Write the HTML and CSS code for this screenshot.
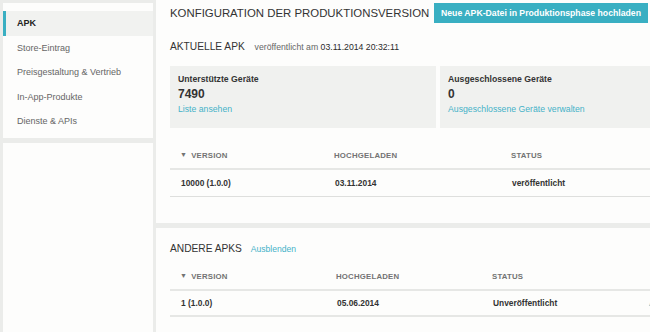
FILE: index.html
```html
<!DOCTYPE html>
<html lang="de">
<head>
    <meta charset="UTF-8">
    <title>APK | Produktionsversion</title>
    <link rel="stylesheet" href="styles.css">
</head>
<body>
    <div class="layout">
        <!-- Seitennavigation -->
        <aside class="sidebar">
            <nav class="card nav">
                <a class="nav-item active">APK</a>
                <a class="nav-item">Store-Eintrag</a>
                <a class="nav-item">Preisgestaltung &amp; Vertrieb</a>
                <a class="nav-item">In-App-Produkte</a>
                <a class="nav-item">Dienste &amp; APIs</a>
            </nav>
            <div class="card filler"></div>
        </aside>

        <main class="content">
            <section class="card panel current">
                <div class="panel-head">
                    <h1>Konfiguration der Produktionsversion</h1>
                    <button class="btn">Neue APK-Datei in Produktionsphase hochladen</button>
                </div>

                <h2 class="sub">Aktuelle APK <span class="meta">veröffentlicht am <b>03.11.2014 20:32:11</b></span></h2>

                <div class="stats">
                    <div class="stat">
                        <div class="stat-label">Unterstützte Geräte</div>
                        <div class="stat-value">7490</div>
                        <a class="link">Liste ansehen</a>
                    </div>
                    <div class="stat">
                        <div class="stat-label">Ausgeschlossene Geräte</div>
                        <div class="stat-value">0</div>
                        <a class="link">Ausgeschlossene Geräte verwalten</a>
                    </div>
                </div>

                <table class="apk-table first">
                    <thead>
                        <tr>
                            <th class="col-version"><span class="arrow">&#9660;</span>Version</th>
                            <th class="col-date">Hochgeladen</th>
                            <th>Status</th>
                        </tr>
                    </thead>
                    <tbody>
                        <tr>
                            <td>10000 (1.0.0)</td>
                            <td>03.11.2014</td>
                            <td>veröffentlicht</td>
                        </tr>
                    </tbody>
                </table>
            </section>

            <section class="card panel other">
                <h2 class="sub">Andere APKs <a class="link toggle">Ausblenden</a></h2>

                <table class="apk-table second">
                    <thead>
                        <tr>
                            <th class="col-version"><span class="arrow">&#9660;</span>Version</th>
                            <th class="col-date">Hochgeladen</th>
                            <th class="col-status">Status</th>
                            <th></th>
                        </tr>
                    </thead>
                    <tbody>
                        <tr>
                            <td>1 (1.0.0)</td>
                            <td>05.06.2014</td>
                            <td>Unveröffentlicht</td>
                            <td><a class="link">Aktivieren</a></td>
                        </tr>
                    </tbody>
                </table>
            </section>
        </main>
    </div>
</body>
</html>
```

FILE: styles.css
```css
:root {
    --color-bg: #ebecea;
    --color-card: #fdfdfc;
    --color-box: #f0f1ef;
    --color-text: #333333;
    --color-muted: #666666;
    --color-head: #737373;
    --color-teal: #39afc2;
    --color-link: #45b2c8;
    --color-line: #e6e7e5;
}

* {
    margin: 0;
    padding: 0;
    box-sizing: border-box;
}

body {
    font-family: "Liberation Sans", Arial, sans-serif;
    background-color: var(--color-bg);
    color: var(--color-text);
    width: 650px;
    height: 332px;
    overflow: hidden;
}

.layout {
    display: flex;
    gap: 3px;
    padding-left: 3px;
    height: 100%;
}

.card {
    background-color: var(--color-card);
}

/* Sidebar */
.sidebar {
    width: 150px;
    flex-shrink: 0;
    display: flex;
    flex-direction: column;
    gap: 5px;
    padding-top: 3px;
}

.nav {
    height: 135px;
    padding-top: 8px;
    display: flex;
    flex-direction: column;
}

.nav-item {
    display: block;
    height: 24.5px;
    line-height: 25px;
    padding-left: 11px;
    font-size: 9px;
    color: var(--color-muted);
    border-left: 3px solid transparent;
    white-space: nowrap;
}

.nav-item.active {
    background-color: #f1f2f0;
    border-left-color: var(--color-teal);
    color: #222222;
    font-weight: bold;
}

.filler {
    flex: 1;
}

/* Main content */
.content {
    flex: 1;
    min-width: 0;
    display: flex;
    flex-direction: column;
    gap: 5px;
    overflow: hidden;
}

.panel {
    padding-left: 14px;
}

.current {
    height: 223px;
    flex-shrink: 0;
}

.other {
    flex: 1;
}

.panel-head {
    display: flex;
    align-items: center;
    justify-content: space-between;
    height: 26px;
    padding-right: 2px;
}

h1 {
    font-size: 11.4px;
    font-weight: normal;
    text-transform: uppercase;
    color: var(--color-text);
    white-space: nowrap;
}

.btn {
    font-family: inherit;
    font-size: 8.7px;
    font-weight: bold;
    color: #ffffff;
    background-color: var(--color-teal);
    border: none;
    height: 20px;
    padding: 0 7px;
    white-space: nowrap;
    flex-shrink: 0;
}

.sub {
    font-size: 10.2px;
    font-weight: normal;
    text-transform: uppercase;
    color: var(--color-text);
    margin-top: 15px;
    white-space: nowrap;
}

.sub .meta {
    text-transform: none;
    font-size: 8.7px;
    color: var(--color-muted);
    margin-left: 7px;
}

.sub .meta b {
    color: #2a2a2a;
    font-weight: normal;
}

.link {
    color: var(--color-link);
    text-decoration: none;
}

.toggle {
    text-transform: none;
    font-size: 8.6px;
    margin-left: 6px;
}

/* Geräte-Statistik */
.stats {
    display: flex;
    gap: 4px;
    margin-top: 14px;
    margin-right: -10px;
}

.stat {
    background-color: var(--color-box);
    height: 62px;
    padding: 8px 8px 0;
    flex: 0 0 266px;
}

.stat + .stat {
    flex: 1;
}

.stat-label {
    font-size: 8.7px;
    font-weight: bold;
    color: var(--color-text);
}

.stat-value {
    font-size: 12px;
    font-weight: bold;
    margin-top: 3px;
}

.stat .link {
    font-size: 8.7px;
    display: block;
    margin-top: 3px;
}

/* Tabellen */
.apk-table {
    border-collapse: collapse;
    table-layout: fixed;
    width: 100%;
    font-size: 8.4px;
}

.apk-table.first {
    margin-top: 14px;
}

.apk-table.second {
    margin-top: 9px;
    width: 560px;
}

.apk-table th {
    text-align: left;
    font-size: 7.8px;
    font-weight: bold;
    color: var(--color-head);
    text-transform: uppercase;
    letter-spacing: 0.2px;
    height: 27px;
    padding-left: 10px;
    border-bottom: 2px solid var(--color-line);
}

.apk-table td {
    font-weight: bold;
    height: 27px;
    padding-left: 11px;
    border-bottom: 1px solid #dedfdd;
    white-space: nowrap;
}

.apk-table .arrow {
    font-size: 7px;
    margin-right: 4px;
    vertical-align: 1px;
}

.first .col-version {
    width: 154px;
}

.first .col-date {
    width: 177px;
}

.second .col-version {
    width: 156px;
}

.second .col-date {
    width: 156px;
}

.second .col-status {
    width: 156px;
}

.second td {
    height: 26px;
    border-bottom-width: 2px;
    border-bottom-color: var(--color-line);
}
```
